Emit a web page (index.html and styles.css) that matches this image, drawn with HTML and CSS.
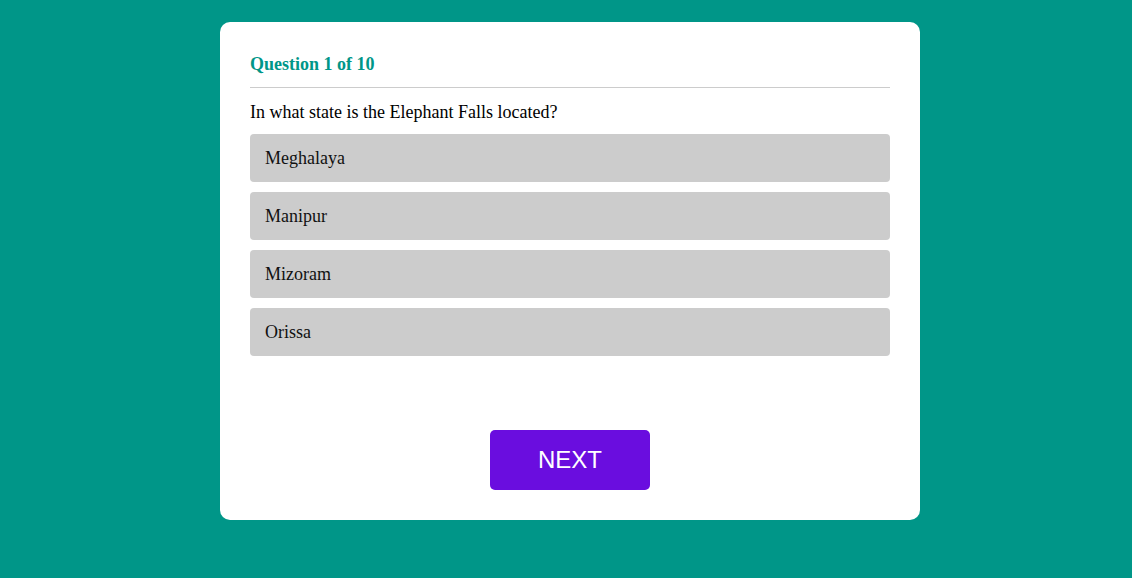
FILE: index.html
```html
<!DOCTYPE html>
<html>
<head>
<meta charset="utf-8">
<link rel="stylesheet" href="styles.css">
</head>
<body>
<div class="page">
  <div class="card">
    <h2 class="counter">Question 1 of 10</h2>
    <p class="question">In what state is the Elephant Falls located?</p>
    <div class="options">
      <div class="option">Meghalaya</div>
      <div class="option">Manipur</div>
      <div class="option">Mizoram</div>
      <div class="option">Orissa</div>
    </div>
    <div class="actions">
      <button class="next">NEXT</button>
    </div>
  </div>
</div>
</body>
</html>
```
FILE: styles.css
```css
html, body {
  margin: 0;
  padding: 0;
  background: #009688;
  height: 100%;
}
body {
  font-family: "Liberation Serif", "Times New Roman", serif;
}
.page {
  padding: 22px 0 0 8px;
}
.card {
  width: 640px;
  margin: 0 auto;
  background: #fff;
  border-radius: 10px;
  padding: 32px 30px 30px;
}
.counter {
  margin: 0;
  font-size: 18px;
  line-height: 20px;
  font-weight: bold;
  color: #009688;
  padding-bottom: 13px;
  border-bottom: 1px solid #ccc;
}
.question {
  margin: 15px 0 13px;
  font-size: 18px;
  line-height: 18px;
  color: #000;
}
.options {
  display: flex;
  flex-direction: column;
  gap: 10px;
}
.option {
  height: 48px;
  display: flex;
  align-items: center;
  padding: 0 15px;
  background: #cccccc;
  border-radius: 4px;
  font-size: 18px;
  color: #111;
}
.actions {
  display: flex;
  justify-content: center;
  margin-top: 74px;
}
.next {
  width: 160px;
  height: 60px;
  border: none;
  border-radius: 5px;
  background: #6a0ddf;
  color: #fff;
  font-family: "Liberation Sans", Arial, sans-serif;
  font-size: 24px;
  cursor: pointer;
}
```
